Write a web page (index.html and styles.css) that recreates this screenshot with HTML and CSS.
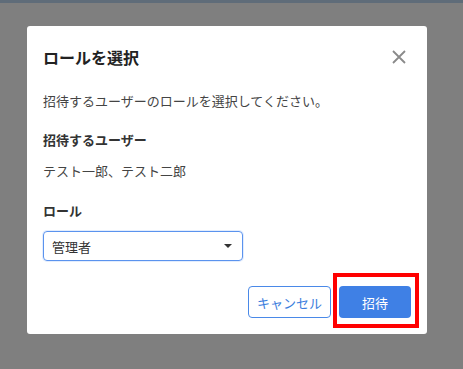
FILE: index.html
```html
<!DOCTYPE html>
<html lang="ja">
<head>
    <meta charset="UTF-8">
    <meta name="viewport" content="width=device-width, initial-scale=1.0">
    <title>ロールを選択</title>
    <link rel="stylesheet" href="styles.css">
</head>
<body>

    <!-- Top strip of the page behind the overlay -->
    <div class="page-strip"></div>

    <!-- Role dialog -->
    <div class="overlay">
        <div class="dialog">
            <div class="dialog-header">
                <h2>ロールを選択</h2>
                <button class="close-button" aria-label="閉じる">
                    <svg width="14" height="14" viewBox="0 0 14 14">
                        <path d="M1 1 L13 13 M13 1 L1 13" stroke="#8a8a8a" stroke-width="1.8" fill="none"/>
                    </svg>
                </button>
            </div>

            <p class="description">招待するユーザーのロールを選択してください。</p>

            <div class="field-label">招待するユーザー</div>
            <div class="user-names">テスト一郎、テスト二郎</div>

            <div class="field-label role-label">ロール</div>
            <div class="select-box">
                <span>管理者</span>
                <span class="select-arrow"></span>
            </div>

            <div class="dialog-actions">
                <button class="cancel-button">キャンセル</button>
                <button class="invite-button">招待</button>
            </div>

            <!-- Highlight marker around the invite button -->
            <div class="highlight"></div>
        </div>
    </div>

</body>
</html>
```

FILE: styles.css
```css
/* Basic Reset */
* {
    margin: 0;
    padding: 0;
    box-sizing: border-box;
}

body {
    font-family: "Noto Sans CJK JP", "Noto Sans", sans-serif;
    background-color: #7f7f7f;
    width: 463px;
    height: 369px;
    overflow: hidden;
}

.page-strip {
    height: 3px;
    background-color: #5f6c79;
}

/* Overlay */
.overlay {
    padding-top: 23px;
    padding-left: 27px;
}

.dialog {
    position: relative;
    width: 400px;
    height: 308px;
    background-color: #fff;
    border-radius: 3px;
    padding: 15px 16px 16px;
    color: #333;
}

.dialog-header {
    display: flex;
    justify-content: space-between;
    align-items: center;
    height: 32px;
}

.dialog-header h2 {
    font-size: 16px;
    font-weight: 700;
    color: #222;
}

.close-button {
    width: 24px;
    height: 24px;
    display: flex;
    align-items: center;
    justify-content: center;
    border: none;
    background: none;
    cursor: pointer;
}

.description {
    margin-top: 18px;
    font-size: 13px;
    line-height: 20px;
    color: #444;
}

.field-label {
    margin-top: 19px;
    font-size: 13px;
    line-height: 20px;
    font-weight: 700;
    color: #333;
}

.role-label {
    margin-top: 20px;
}

.user-names {
    margin-top: 11px;
    font-size: 13px;
    line-height: 20px;
    color: #444;
}

/* Select */
.select-box {
    margin-top: 10px;
    width: 200px;
    height: 30px;
    border: 1px solid #5b93ee;
    border-radius: 4px;
    padding: 0 10px 0 8px;
    display: flex;
    align-items: center;
    justify-content: space-between;
    font-size: 13px;
    color: #333;
    box-shadow: 0 0 0 1px rgba(66, 133, 244, 0.15);
}

.select-arrow {
    width: 0;
    height: 0;
    border-left: 4px solid transparent;
    border-right: 4px solid transparent;
    border-top: 4px solid #333;
}

/* Buttons */
.dialog-actions {
    margin-top: 25px;
    display: flex;
    justify-content: flex-end;
    gap: 8px;
}

.dialog-actions button {
    height: 32px;
    font-family: inherit;
    font-size: 13px;
    border-radius: 4px;
    cursor: pointer;
}

.cancel-button {
    width: 83px;
    background-color: #fff;
    color: #3b7ddd;
    border: 1px solid #4a89e8;
}

.invite-button {
    width: 72px;
    background-color: #3f80e5;
    color: #fff;
    border: none;
}

.highlight {
    position: absolute;
    left: 306px;
    top: 247px;
    width: 86px;
    height: 55px;
    border: 4px solid #f00;
    pointer-events: none;
}
```
